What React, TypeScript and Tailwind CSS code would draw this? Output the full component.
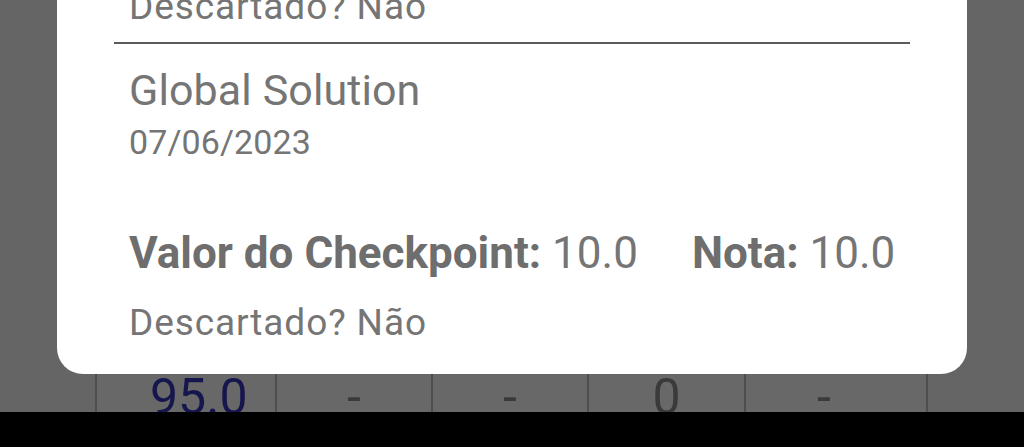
import React from "react";

export default function App() {
  const font = { fontFamily: "Roboto, 'Noto Sans', Arial, sans-serif" };
  return (
    <div
      className="relative w-[1024px] h-[447px] overflow-hidden bg-[#656565] flex flex-col"
      style={font}
    >
      <div className="flex-1 flex flex-col justify-end">
        <div className="ml-[95px] w-[833px] h-[60px] flex overflow-hidden border-l-2 border-[#4e4e4e] bg-[#686868]">
          <div className="w-[180px] border-r-2 border-[#4e4e4e] pt-[20px] pl-[53px] text-[50px] leading-[50px] text-[#16164e]">
            95.0
          </div>
          <div className="w-[156px] border-r-2 border-[#4e4e4e] pt-[20px] text-center text-[50px] leading-[50px] text-[#3a3a3a]">
            -
          </div>
          <div className="w-[156px] border-r-2 border-[#4e4e4e] pt-[20px] text-center text-[50px] leading-[50px] text-[#3a3a3a]">
            -
          </div>
          <div className="w-[157px] border-r-2 border-[#4e4e4e] pt-[20px] text-center text-[50px] leading-[50px] text-[#3a3a3a]">
            0
          </div>
          <div className="w-[182px] border-r-2 border-[#4e4e4e] pt-[20px] pl-[71px] text-[50px] leading-[50px] text-[#3a3a3a]">
            -
          </div>
        </div>
      </div>
      <div className="h-[35px] bg-black" />

      <div className="absolute left-[57px] bottom-[73px] w-[910px] bg-white rounded-[26px] px-[57px] pt-[40px] pb-[33px] text-[#757575]">
        <div className="px-[15px] text-[37px] leading-[37px] tracking-[0.9px]">
          Descartado? Não
        </div>
        <div className="mt-[17px] h-[2px] bg-[#5c5c5c]" />
        <div className="px-[15px] mt-[24px] text-[43px] leading-[44px] tracking-[0.1px]">
          Global Solution
        </div>
        <div className="px-[15px] mt-[13px] text-[34px] leading-[34px] tracking-[0.1px]">
          07/06/2023
        </div>
        <div className="px-[15px] mt-[72px] flex gap-[54px] text-[44px] leading-[44px] whitespace-nowrap">
          <span>
            <span className="font-bold text-[#6e6e6e]">Valor do Checkpoint:</span> 10.0
          </span>
          <span>
            <span className="font-bold text-[#6e6e6e]">Nota:</span> 10.0
          </span>
        </div>
        <div className="px-[15px] mt-[29px] text-[37px] leading-[37px] tracking-[0.9px]">
          Descartado? Não
        </div>
      </div>
    </div>
  );
}
